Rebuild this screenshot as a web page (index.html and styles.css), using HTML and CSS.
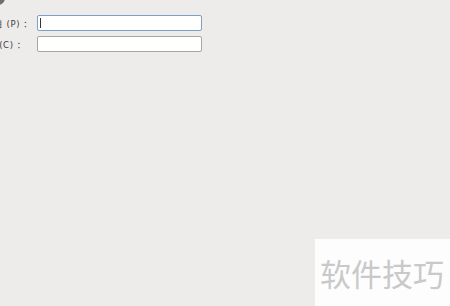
FILE: index.html
```html
<!DOCTYPE html>
<html lang="zh-CN">
<head>
    <meta charset="UTF-8">
    <meta name="viewport" content="width=device-width, initial-scale=1.0">
    <title>属性</title>
    <link rel="stylesheet" href="styles.css">
</head>
<body>
    <div class="window">
        <div class="top-icon"></div>
        <form class="fields">
            <div class="field-row">
                <label class="field-label" for="name">项目 (P) ：</label>
                <div class="input-wrap">
                    <input type="text" id="name" class="field-input focused">
                    <span class="caret"></span>
                </div>
            </div>
            <div class="field-row">
                <label class="field-label short" for="comment">注释(C) ：</label>
                <div class="input-wrap">
                    <input type="text" id="comment" class="field-input">
                </div>
            </div>
        </form>
        <div class="spacer"></div>
        <div class="watermark-row">
            <div class="watermark">软件技巧</div>
        </div>
    </div>
</body>
</html>
```

FILE: styles.css
```css
html, body {
    margin: 0;
    padding: 0;
}
body {
    background: #edecea;
    font-family: "DejaVu Sans", "Noto Sans CJK SC", sans-serif;
    width: 450px;
    height: 306px;
    overflow: hidden;
}
.window {
    display: flex;
    flex-direction: column;
    height: 306px;
}
.top-icon {
    width: 14px;
    height: 14px;
    margin: -9px 0 0 -9px;
    border-radius: 50%;
    background: #6f6e6c;
    flex-shrink: 0;
}
.fields {
    display: flex;
    flex-direction: column;
    gap: 5px;
    margin-top: 10px;
}
.field-row {
    display: flex;
    align-items: center;
    height: 16px;
}
.field-label {
    width: 37px;
    overflow: hidden;
    white-space: nowrap;
    font-size: 8.5px;
    letter-spacing: 0.6px;
    color: #3c3c3c;
}
.field-label::before {
    content: "";
    display: inline-block;
    margin-left: -15px;
}
.field-label.short::before {
    margin-left: -19px;
}
.input-wrap {
    position: relative;
    display: flex;
}
.field-input {
    box-sizing: border-box;
    width: 165px;
    height: 16px;
    margin: 0;
    padding: 0 2px;
    border: 1px solid #a7a6a3;
    border-radius: 2px;
    background: #ffffff;
    outline: none;
}
.field-input.focused {
    border-color: #7f9fc6;
}
.caret {
    position: absolute;
    left: 3px;
    top: 3px;
    width: 1px;
    height: 10px;
    background: #333;
}
.spacer {
    flex: 1;
}
.watermark-row {
    display: flex;
    justify-content: flex-end;
}
.watermark {
    width: 135px;
    height: 67px;
    background: #fdfdfd;
    color: #c9c9c9;
    font-family: "Noto Sans CJK SC", sans-serif;
    font-size: 31px;
    line-height: 67px;
    padding-left: 5px;
    box-sizing: border-box;
    white-space: nowrap;
    overflow: hidden;
}
```
